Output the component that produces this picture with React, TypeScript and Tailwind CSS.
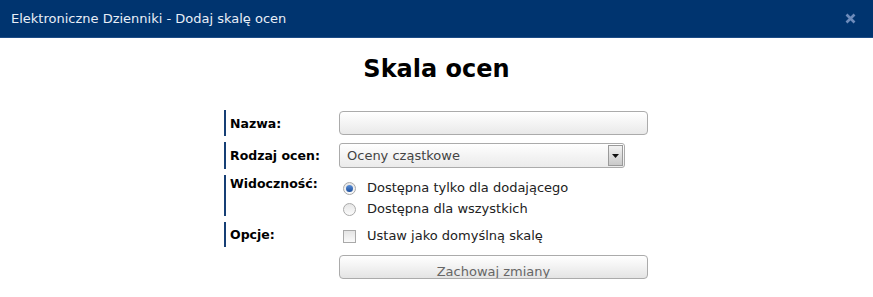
import React from 'react';

const Radio: React.FC<{ checked?: boolean }> = ({ checked }) => (
  <span className="flex h-[13px] w-[13px] items-center justify-center rounded-full border border-[#a9a9a9] bg-gradient-to-b from-[#e6e6e6] to-[#fbfbfb]">
    {checked && (
      <span className="h-[7px] w-[7px] rounded-full bg-gradient-to-b from-[#5a8ed6] to-[#1c4f9c]" />
    )}
  </span>
);

const App: React.FC = () => {
  return (
    <div
      className="w-[873px] h-[297px] bg-white overflow-hidden"
      style={{ fontFamily: '"DejaVu Sans", Verdana, sans-serif' }}
    >
      {/* Title bar */}
      <div className="flex h-[38px] items-center justify-between bg-[#00346f] border-b border-[#1d4c86] pl-[11px] pr-[17px]">
        <span className="text-[13px] text-[#e8eef7]">Elektroniczne Dzienniki - Dodaj skalę ocen</span>
        <svg width="11" height="11" viewBox="0 0 11 11">
          <path d="M1.5 1.5 L9.5 9.5 M9.5 1.5 L1.5 9.5" stroke="#6d8bbb" strokeWidth="2.6" />
        </svg>
      </div>

      <h1 className="mt-[17px] text-center text-[24px] font-bold leading-[28px] text-black">Skala ocen</h1>

      {/* Form */}
      <div className="ml-[224px] mt-[27px] w-[424px] text-[13px] leading-[16px]">
        <div className="flex h-[26px] items-center border-l-2 border-[#163f75]">
          <div className="w-[113px] pl-[4px] pt-[1px] text-[12.5px] font-bold text-black">Nazwa:</div>
          <div className="h-[24px] w-[309px] rounded-[4px] border border-[#ababab] bg-gradient-to-b from-white via-[#f4f4f4] to-[#e9e9e9]" />
        </div>

        <div className="mt-[6px] flex h-[27px] items-center border-l-2 border-[#163f75]">
          <div className="w-[113px] pl-[4px] pt-[1px] text-[12.5px] font-bold text-black">Rodzaj ocen:</div>
          <div className="flex h-[25px] w-[286px] items-center justify-between rounded-[3px] border border-[#ababab] bg-gradient-to-b from-white via-[#f4f4f4] to-[#ebebeb] pl-[7px] pr-[1px]">
            <span className="pt-[1px] text-[#444]">Oceny cząstkowe</span>
            <span className="flex h-[21px] w-[15px] items-center justify-center border border-[#9a9a9a] bg-gradient-to-b from-[#f2f2f2] to-[#c9c9c9]">
              <svg width="7" height="4" viewBox="0 0 7 4">
                <path d="M0 0 H7 L3.5 4 Z" fill="#111" />
              </svg>
            </span>
          </div>
        </div>

        <div className="mt-[6px] flex h-[41px] items-start border-l-2 border-[#163f75]">
          <div className="w-[113px] pl-[4px] pt-[1px] text-[12.5px] font-bold text-black">Widoczność:</div>
          <div className="flex flex-col gap-[5px] pt-[5px] text-[#222]">
            <div className="flex items-center">
              <span className="ml-[4px] mr-[11px]">
                <Radio checked />
              </span>
              Dostępna tylko dla dodającego
            </div>
            <div className="flex items-center">
              <span className="ml-[4px] mr-[11px]">
                <Radio />
              </span>
              Dostępna dla wszystkich
            </div>
          </div>
        </div>

        <div className="mt-[6px] flex h-[25px] items-center border-l-2 border-[#163f75]">
          <div className="w-[113px] pl-[4px] text-[12.5px] font-bold text-black">Opcje:</div>
          <div className="flex items-center pt-[3px] text-[#222]">
            <span className="ml-[4px] mr-[11px] h-[13px] w-[13px] border border-[#a9a9a9] bg-gradient-to-b from-[#e4e4e4] to-[#fafafa]" />
            Ustaw jako domyślną skalę
          </div>
        </div>

        <div className="mt-[8px] flex pl-[115px]">
          <button className="h-[24px] w-[309px] overflow-hidden rounded-[4px] border border-[#ababab] bg-gradient-to-b from-white via-[#f2f2f2] to-[#e4e4e4] pt-[8px] text-center text-[13px] leading-[16px] text-[#666]">
            Zachowaj zmiany
          </button>
        </div>
      </div>
    </div>
  );
};

export default App;
